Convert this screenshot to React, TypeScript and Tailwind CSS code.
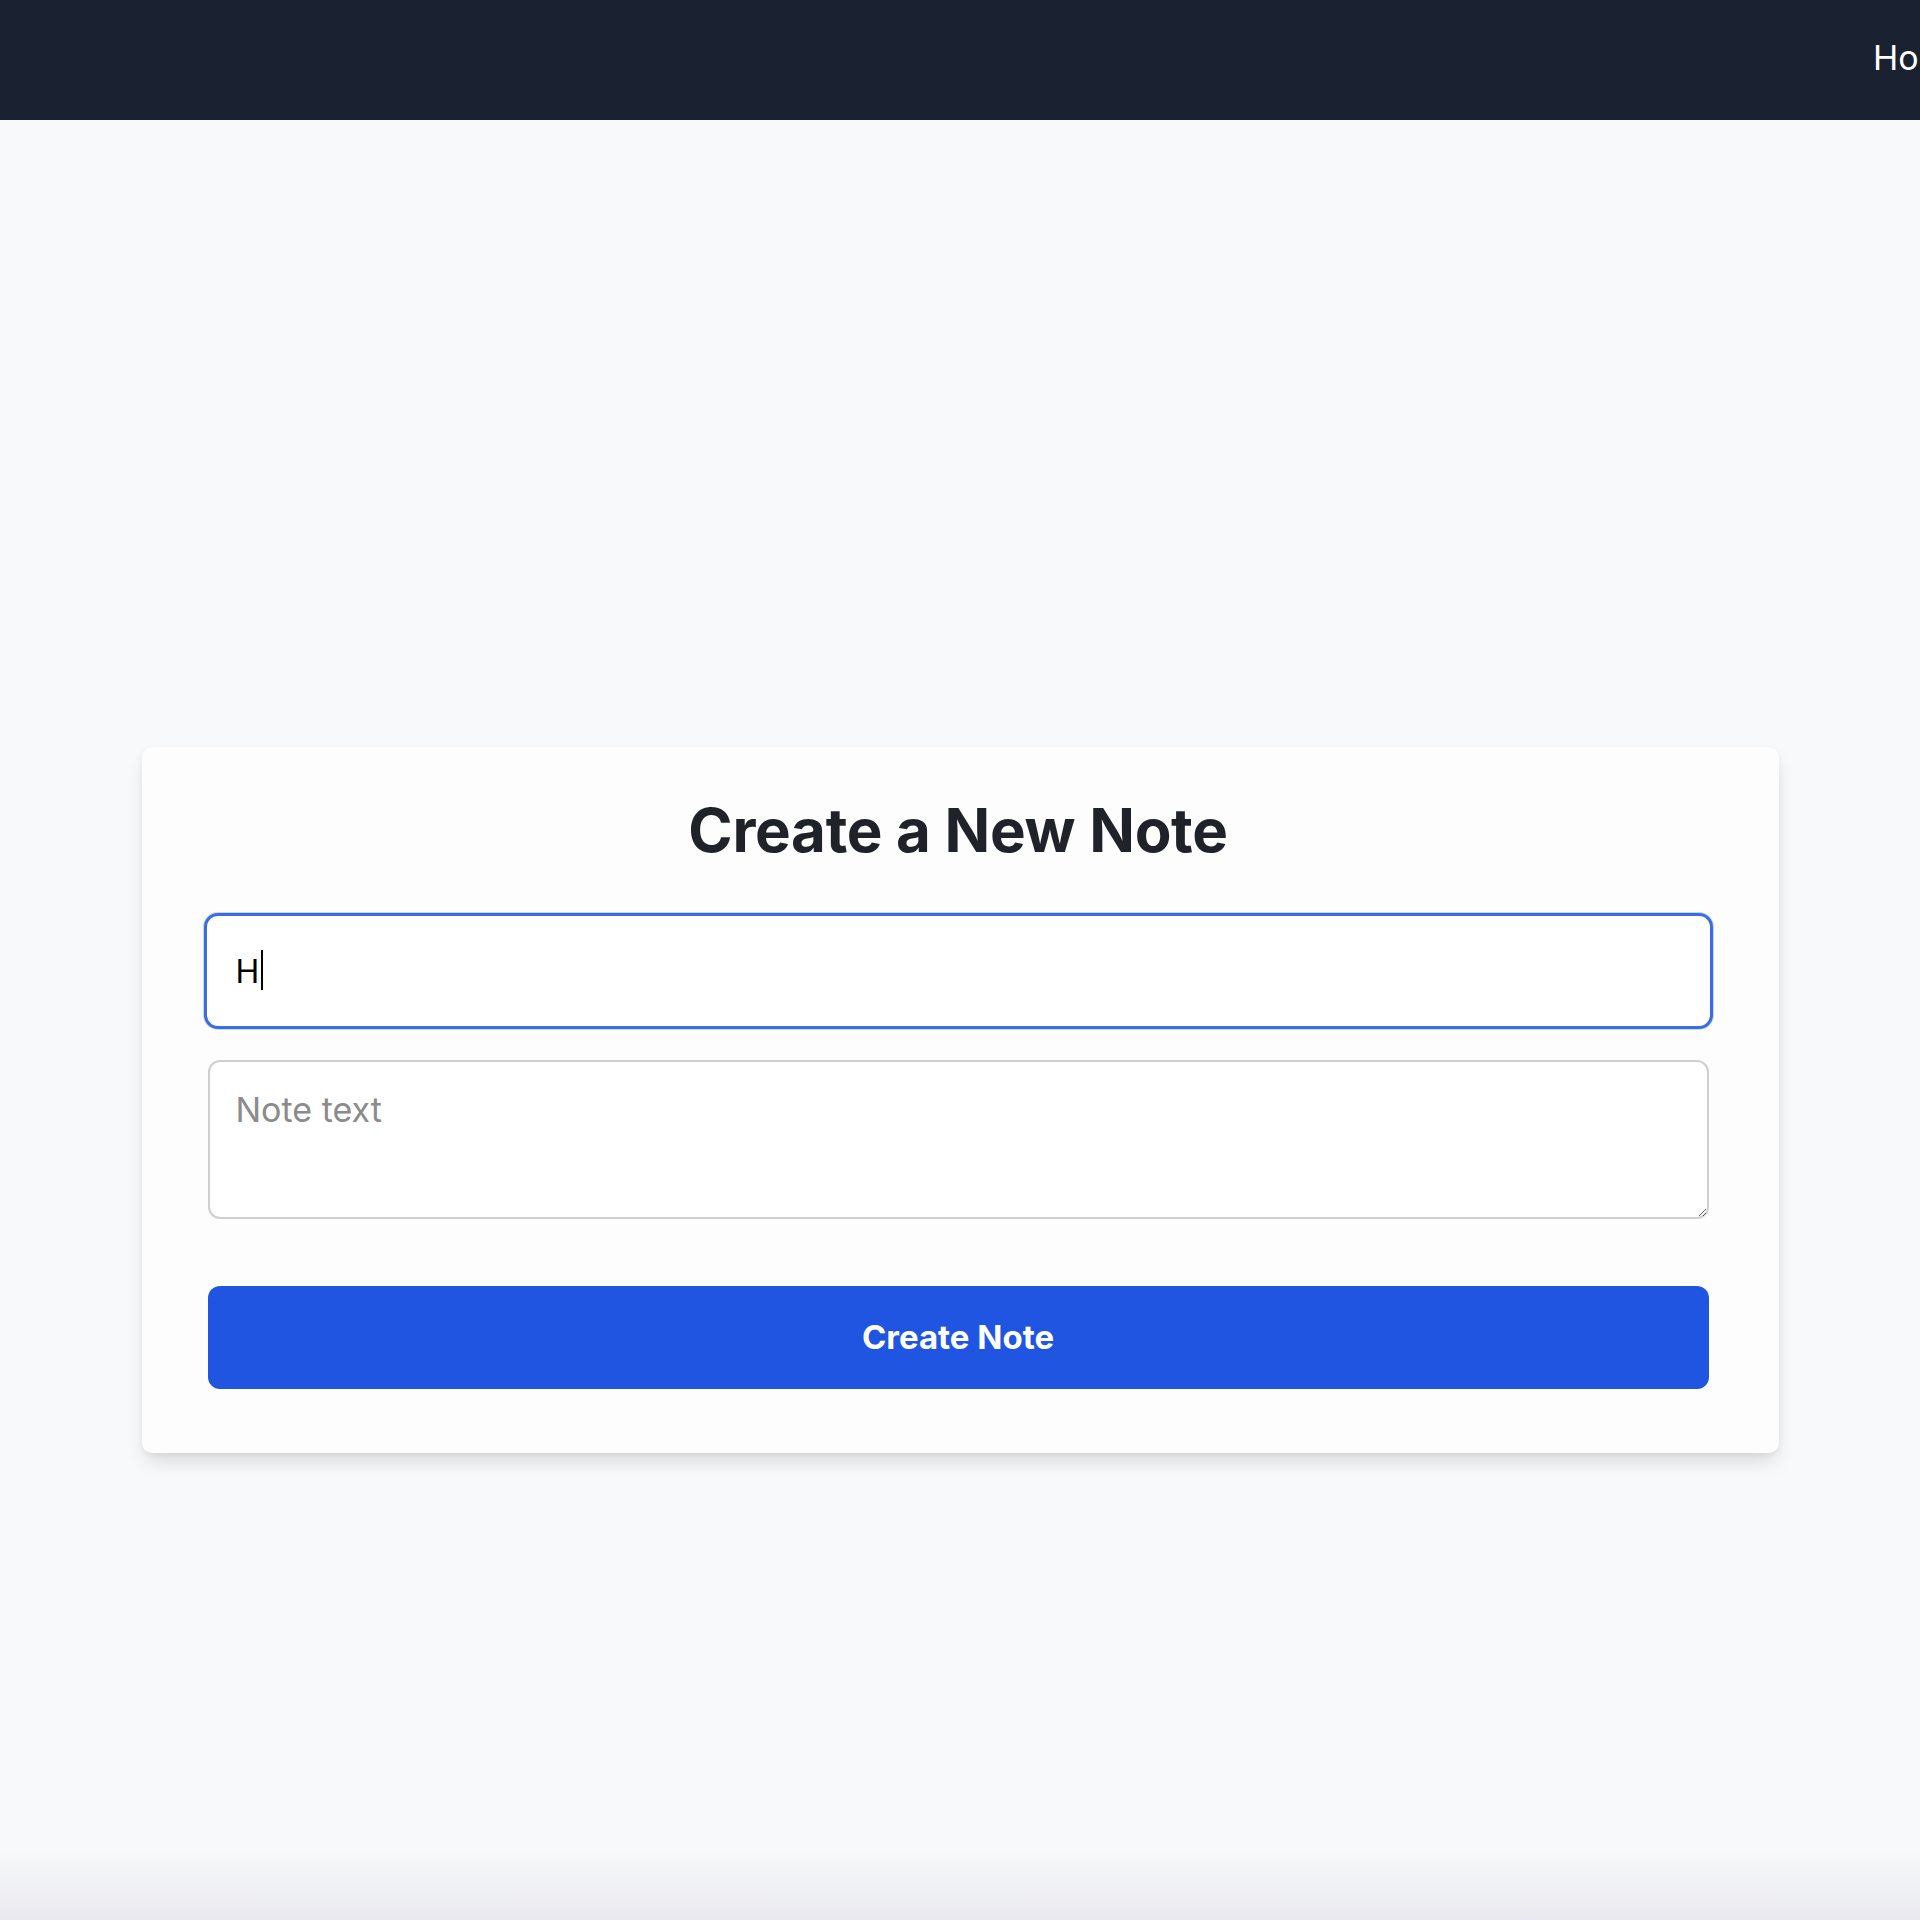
import React from "react";

export default function App() {
  return (
    <div
      className="min-h-[1920px] flex flex-col bg-[#f8f9fa]"
      style={{ fontFamily: "Inter, 'Noto Sans', sans-serif" }}
    >
      <nav className="h-[120px] shrink-0 bg-[#1a2130] flex items-center overflow-hidden whitespace-nowrap pl-[1873px] pb-1">
        <a className="text-white text-[34px] leading-none shrink-0">Home</a>
        <a className="text-white text-[34px] leading-none shrink-0 ml-10">Notes</a>
      </nav>

      <main className="flex-1 flex flex-col items-center pt-[627px]">
        <div className="w-[1637px] bg-[#fdfdfe] rounded-[10px] shadow-[0_12px_20px_-4px_rgba(0,0,0,0.13),0_2px_6px_rgba(0,0,0,0.05)] pl-[66px] pr-[70px] pt-[53px] pb-[64px]">
          <h1 className="text-[60px] leading-none font-bold text-center text-[#1f2329] tracking-[-0.005em] mb-[53px]">
            Create a New Note
          </h1>
          <form className="flex flex-col" onSubmit={(e) => e.preventDefault()}>
            <div className="relative -mx-1">
              <input
                type="text"
                defaultValue="H"
                className="w-full h-[116px] rounded-[14px] border-[3px] border-[#3a6ee0] shadow-[0_0_0_1px_rgba(90,140,235,0.35)] bg-white pl-[29px] text-[32px] text-black outline-none caret-transparent"
              />
              <span className="absolute left-[57px] top-[37px] w-[2px] h-[40px] bg-black" />
            </div>
            <textarea
              placeholder="Note text"
              className="mt-[31px] w-full h-[159px] rounded-[12px] border-2 border-[#cfcfcf] bg-white pl-[26px] pt-[28px] text-[34px] leading-[40px] text-black placeholder:text-[#8b8b8b] outline-none"
            />
            <button
              type="submit"
              className="mt-[67px] w-full h-[103px] rounded-[12px] bg-[#1f55e0] text-white text-[33px] font-bold"
            >
              Create Note
            </button>
          </form>
        </div>
        <div className="flex-1" />
        <div className="w-full h-[70px] bg-gradient-to-b from-[#f8f9fa] to-[#e9e9ef]" />
      </main>
    </div>
  );
}
